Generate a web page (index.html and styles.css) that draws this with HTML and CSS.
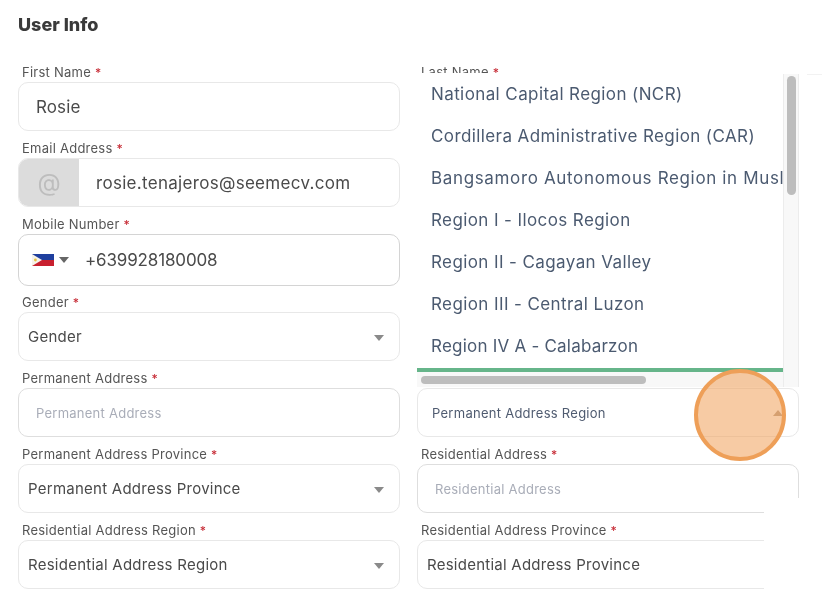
FILE: index.html
```html
<!DOCTYPE html>
<html lang="en">
<head>
<meta charset="utf-8">
<title>User Info</title>
<link rel="stylesheet" href="styles.css">
</head>
<body>
<main class="page">
  <h1 class="title">User Info</h1>
  <form class="form">
    <div class="field">
      <label class="label">First Name <b>*</b></label>
      <div class="box"><span class="value big pad-wide">Rosie</span></div>
    </div>
    <div class="field">
      <label class="label">Last Name <b>*</b></label>
      <div class="box"></div>
    </div>
    <div class="field">
      <label class="label">Email Address <b>*</b></label>
      <div class="box email"><span class="at">@</span><span class="value big email-value">rosie.tenajeros@seemecv.com</span></div>
    </div>
    <div class="field"></div>
    <div class="field">
      <label class="label">Mobile Number <b>*</b></label>
      <div class="box phone">
        <svg class="flag" width="22" height="12" viewBox="0 0 22 12" aria-hidden="true">
          <rect width="22" height="6" fill="#1f3f9e"/>
          <rect y="6" width="22" height="6" fill="#c8202f"/>
          <path d="M0 0 10 6 0 12Z" fill="#f6f3ea"/>
          <circle cx="3.4" cy="6" r="1.4" fill="#e8c340"/>
        </svg>
        <span class="caret phone-caret"></span>
        <span class="value big phone-value">+639928180008</span>
      </div>
    </div>
    <div class="field"></div>
    <div class="field">
      <label class="label">Gender <b>*</b></label>
      <div class="box select"><span class="value">Gender</span><span class="caret"></span></div>
    </div>
    <div class="field"></div>
    <div class="field">
      <label class="label">Permanent Address <b>*</b></label>
      <div class="box strong"><span class="placeholder pad-wide">Permanent Address</span></div>
    </div>
    <div class="field">
      <div class="label"></div>
      <div class="box select"><span class="region">Permanent Address Region</span><span class="caret up"></span></div>
    </div>
    <div class="field">
      <label class="label">Permanent Address Province <b>*</b></label>
      <div class="box select"><span class="value">Permanent Address Province</span><span class="caret"></span></div>
    </div>
    <div class="field">
      <label class="label">Residential Address <b>*</b></label>
      <div class="box strong"><span class="placeholder pad-wide">Residential Address</span></div>
    </div>
    <div class="field">
      <label class="label">Residential Address Region <b>*</b></label>
      <div class="box select"><span class="value">Residential Address Region</span><span class="caret"></span></div>
    </div>
    <div class="field">
      <label class="label">Residential Address Province <b>*</b></label>
      <div class="box select"><span class="value">Residential Address Province</span></div>
    </div>
  </form>
</main>

<div class="dropdown">
  <ul class="options">
    <li>National Capital Region (NCR)</li>
    <li>Cordillera Administrative Region (CAR)</li>
    <li class="long">Bangsamoro Autonomous Region in Muslim Mindanao</li>
    <li>Region I - Ilocos Region</li>
    <li>Region II - Cagayan Valley</li>
    <li>Region III - Central Luzon</li>
    <li class="tight">Region IV A - Calabarzon</li>
  </ul>
  <div class="vtrack"><span class="vthumb"></span></div>
  <div class="htrack"><span class="hthumb"></span></div>
</div>
<div class="top-mask"></div>
<div class="edge"></div>
<div class="bottom-mask"></div>
<div class="touch"></div>
</body>
</html>
```
FILE: styles.css
```css
* { box-sizing: border-box; }
html, body { margin: 0; height: 100%; background: #fff; overflow: hidden; }
body { position: relative; font-family: Inter, "Open Sans", "Liberation Sans", sans-serif; color: #4a4a4a; filter: blur(.35px); }

.page { padding: 15px 23px 0 18px; }
.title { margin: 0 0 21px; font-size: 18px; line-height: 20px; font-weight: 800; color: #3a3a3a; }

.form { display: grid; grid-template-columns: 382px 382px; column-gap: 17px; }
.field { display: flex; flex-direction: column; min-height: 76px; }
.label { height: 26px; padding: 9px 0 0 4px; font-size: 13px; line-height: 14px; color: #555; white-space: nowrap; letter-spacing: .25px; }
.label b { color: #c8303a; font-weight: 500; font-size: 12px; }

.box { display: flex; align-items: center; height: 49px; border: 1px solid #e8e8e8; border-radius: 10px; background: #fff; }
.box.strong { border: 1.5px solid #dedede; }

.value { font-size: 15px; color: #4a4a4a; letter-spacing: .25px; white-space: nowrap; }
.big { font-size: 17px; letter-spacing: .1px; }
.pad-wide { margin-left: 17px; }
.select { justify-content: space-between; padding: 0 15px 0 9px; }

.email { overflow: hidden; }
.at { display: flex; align-items: center; justify-content: center; width: 60px; height: 100%; background: #dcdcdc; color: #bdbdbd; font-size: 24px; }
.big.email-value { margin-left: 17px; letter-spacing: .3px; }

.box.phone { height: 52px; padding-left: 13px; border: 1.5px solid #d4d4d4; }
.flag { flex: none; }
.phone-caret { margin: 0 0 0 5px; }
.big.phone-value { margin-left: 16px; letter-spacing: -.15px; }

.caret { flex: none; width: 0; height: 0; margin-top: 3px; border-left: 5.5px solid transparent; border-right: 5.5px solid transparent; border-top: 6px solid #8a8a8a; }
.phone-caret.caret { margin-top: 0; border-top-color: #666; }
.caret.up { margin-top: 0; border-top: 0; border-bottom: 6px solid #b5a08c; }

.placeholder { font-size: 13px; color: #a9adb8; letter-spacing: .25px; }
.region { margin-left: 5px; font-size: 13px; color: #4f5b70; letter-spacing: .27px; }

.dropdown { position: absolute; left: 417px; top: 73px; width: 382px; height: 314px; background: #f8f8f8; box-shadow: inset 0 1px 0 #ececec; overflow: hidden; }
.options { margin: 0; padding: 0; width: 366px; height: 299px; list-style: none; background: #fff; border-bottom: 4px solid #66b58a; overflow: hidden; }
.options li { height: 42px; padding-left: 14px; font-size: 17px; line-height: 42px; color: #4b5a70; white-space: nowrap; letter-spacing: .4px; }
.options li.long { letter-spacing: .65px; }
.options li.tight { letter-spacing: .22px; }
.vtrack { position: absolute; right: 0; top: 0; width: 16px; height: 100%; border-left: 1px solid #ececec; border-right: 1px solid #ececec; }
.vthumb { position: absolute; left: 3px; top: 3px; width: 9px; height: 119px; border-radius: 5px; background: #bdbdbd; }
.htrack { position: absolute; left: 0; top: 303px; width: 366px; height: 8px; }
.hthumb { position: absolute; left: 4px; top: 0; width: 225px; height: 8px; border-radius: 4px; background: #bdbdbd; }

.top-mask { position: absolute; left: 752px; top: 60px; width: 70px; height: 14px; background: #fff; }
.edge { position: absolute; left: 807px; top: 74px; width: 15px; height: 1px; background: #f2f2f2; }
.bottom-mask { position: absolute; left: 764px; top: 498px; width: 58px; height: 112px; background: #fff; }
.touch { position: absolute; left: 694px; top: 369px; width: 92px; height: 92px; border-radius: 50%; border: 4px solid #ee9f58; background: rgba(240, 160, 90, .55); }
```
